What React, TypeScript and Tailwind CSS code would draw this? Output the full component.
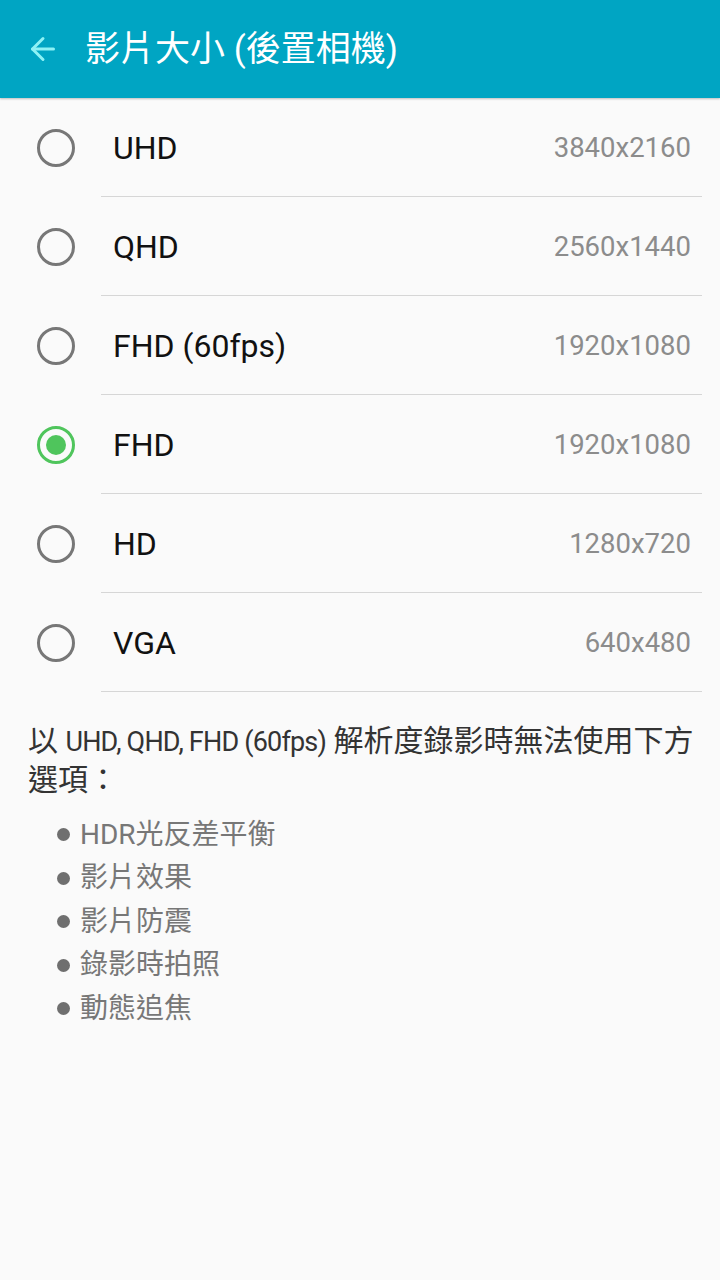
import { ArrowLeft } from "lucide-react";

const FONT = { fontFamily: 'Roboto, "Noto Sans CJK TC", sans-serif' };

const OPTIONS = [
  { label: "UHD", size: "3840x2160" },
  { label: "QHD", size: "2560x1440" },
  { label: "FHD (60fps)", size: "1920x1080" },
  { label: "FHD", size: "1920x1080", selected: true },
  { label: "HD", size: "1280x720" },
  { label: "VGA", size: "640x480" },
];

const DISABLED = ["HDR光反差平衡", "影片效果", "影片防震", "錄影時拍照", "動態追焦"];

function Radio({ checked }: { checked?: boolean }) {
  if (checked) {
    return (
      <div className="w-[38px] h-[38px] rounded-full border-[3px] border-[#4fc55c] flex items-center justify-center">
        <div className="w-[20px] h-[20px] rounded-full bg-[#4fc55c]" />
      </div>
    );
  }
  return <div className="w-[38px] h-[38px] rounded-full border-[3px] border-[#777777]" />;
}

export default function App() {
  return (
    <div className="w-[720px] h-[1280px] bg-[#fafafa] overflow-hidden" style={FONT}>
      {/* Header */}
      <div className="h-[98px] bg-[#00a5c3] flex items-center shadow-[0_1px_2px_rgba(0,0,0,0.25)] relative z-10">
        <div className="w-[85px] flex items-center pl-[25px]">
          <ArrowLeft size={36} strokeWidth={2} className="text-[#8ef2f5]" />
        </div>
        <h1 className="text-white text-[35px] leading-none">影片大小 (後置相機)</h1>
      </div>

      {/* Options */}
      <div>
        {OPTIONS.map((o) => (
          <div key={o.label} className="flex h-[99px]">
            <div className="w-[101px] flex items-center pl-[37px]">
              <Radio checked={o.selected} />
            </div>
            <div className="flex-1 flex items-center justify-between pl-[12px] pr-[11px] mr-[18px] border-b border-[#d6d6d6] pt-[1px]">
              <span className="text-[32px] text-[#111111]">{o.label}</span>
              <span className="text-[27.5px] text-[#8c8c8c]">{o.size}</span>
            </div>
          </div>
        ))}
      </div>

      {/* Note */}
      <div className="pl-[28px] pt-[30px]">
        <p className="text-[30px] leading-[38px] text-[#333333]">
          <span className="whitespace-nowrap">
            以 <span className="text-[27px] tracking-[-0.8px]">UHD, QHD, FHD (60fps)</span> 解析度錄影時無法使用下方
          </span>
          <br />
          選項：
        </p>
        <ul className="mt-[14px] pl-[29px]">
          {DISABLED.map((d) => (
            <li key={d} className="flex items-center h-[43.5px] text-[28px] text-[#777777]">
              <span className="w-[13px] h-[13px] rounded-full bg-[#6f6f6f] mr-[10px]" />
              {d}
            </li>
          ))}
        </ul>
      </div>
    </div>
  );
}
